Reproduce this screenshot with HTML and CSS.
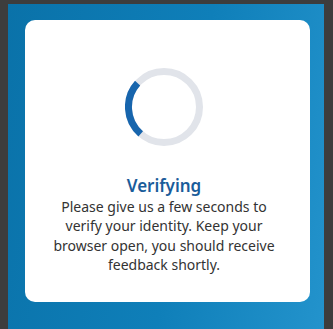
FILE: index.html
```html
<!DOCTYPE html>
<html>
<head>
<meta charset="utf-8">
<link rel="stylesheet" href="styles.css">
</head>
<body>
<div class="frame">
  <div class="panel">
    <div class="card">
      <svg class="spinner" width="78" height="78" viewBox="0 0 78 78">
        <circle cx="39" cy="39" r="35.5" fill="none" stroke="#e1e4ea" stroke-width="7"/>
        <path d="M 12.6 15.2 A 35.5 35.5 0 0 0 15.7 65.8" fill="none" stroke="#1765ad" stroke-width="7"/>
      </svg>
      <h1 class="title">Verifying</h1>
      <p class="text">Please give us a few seconds to verify your identity. Keep your browser open, you should receive feedback shortly.</p>
    </div>
  </div>
</div>
</body>
</html>
```
FILE: styles.css
```css
html, body {
  margin: 0;
  padding: 0;
  background: #3d3d3d;
}
.frame {
  width: 333px;
  height: 329px;
  padding: 4px 9px 0 8px;
  box-sizing: border-box;
}
.panel {
  height: 325px;
  background: linear-gradient(100deg, #0a72a9 0%, #0f7fb9 55%, #2393cc 100%);
  padding: 16px 14px 0 17px;
  box-sizing: border-box;
}
.card {
  height: 282px;
  background: #ffffff;
  border-radius: 10px;
  display: flex;
  flex-direction: column;
  align-items: center;
  padding: 48px 7px 0 0;
  box-sizing: border-box;
  font-family: "Noto Sans", sans-serif;
}
.spinner {
  display: block;
}
.title {
  margin: 30px 0 0;
  font-size: 17px;
  font-weight: 600;
  color: #1a5c9a;
  line-height: 20px;
}
.text {
  margin: 1px 0 0;
  width: 240px;
  text-align: center;
  font-size: 14px;
  line-height: 19.3px;
  color: #333;
}
```
